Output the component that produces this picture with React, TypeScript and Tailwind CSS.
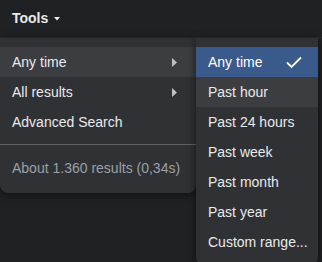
import React from 'react';

const MAIN_ITEMS = [
  { label: 'Any time', arrow: true, hover: true },
  { label: 'All results', arrow: true, hover: false },
  { label: 'Advanced Search', arrow: false, hover: false },
];

const TIME_ITEMS = [
  'Any time',
  'Past hour',
  'Past 24 hours',
  'Past week',
  'Past month',
  'Past year',
  'Custom range...',
];

const App: React.FC = () => {
  return (
    <div
      className="w-[322px] h-[262px] bg-[#202124] overflow-hidden text-[14px] text-[#e8eaed]"
      style={{ fontFamily: '"Liberation Sans", Arial, sans-serif' }}
    >
      <div className="h-[38px] flex items-center pl-3 border-b border-[#2a2b2e]">
        <span className="font-bold text-[#e8eaed]">Tools</span>
        <svg width="6" height="4" viewBox="0 0 6 4" className="ml-[6px] mt-[1px]">
          <path d="M0 0 L6 0 L3 3.5 Z" fill="#e8eaed" />
        </svg>
      </div>

      <div className="relative">
        <div className="w-[196px] bg-[#303134] rounded-b-lg pt-[9px] pb-[10px] shadow-[0_2px_8px_rgba(0,0,0,0.5)]">
          {MAIN_ITEMS.map((item) => (
            <div
              key={item.label}
              className={`h-[30px] flex items-center justify-between pl-3 pr-[19px] ${
                item.hover ? 'bg-[#3c3d41]' : ''
              }`}
            >
              <span>{item.label}</span>
              {item.arrow && (
                <svg width="5" height="9" viewBox="0 0 5 9">
                  <path d="M0 0 L5 4.5 L0 9 Z" fill="#bdc1c6" />
                </svg>
              )}
            </div>
          ))}
          <div className="h-px bg-[#5f6368] mt-[7px]" />
          <div className="h-[30px] flex items-center pl-3 mt-[8px] text-[#9aa0a6]">
            About 1.360 results (0,34s)
          </div>
        </div>

        <div className="absolute left-[196px] top-0 w-[122px] bg-[#303134] rounded-b-lg pt-[9px] pb-2 shadow-[0_2px_8px_rgba(0,0,0,0.6)]">
          {TIME_ITEMS.map((label, i) => (
            <div
              key={label}
              className={`h-[30px] flex items-center justify-between pl-3 pr-4 ${
                i === 0 ? 'bg-[#3a5a8c] text-white' : i === 1 ? 'bg-[#3c3d41]' : ''
              }`}
            >
              <span className="whitespace-nowrap">{label}</span>
              {i === 0 && (
                <svg width="16" height="13" viewBox="0 0 16 13">
                  <path d="M1 6.5 L5.5 11 L15 1.5" stroke="#ffffff" strokeWidth="1.8" fill="none" />
                </svg>
              )}
            </div>
          ))}
        </div>
      </div>
    </div>
  );
};

export default App;
